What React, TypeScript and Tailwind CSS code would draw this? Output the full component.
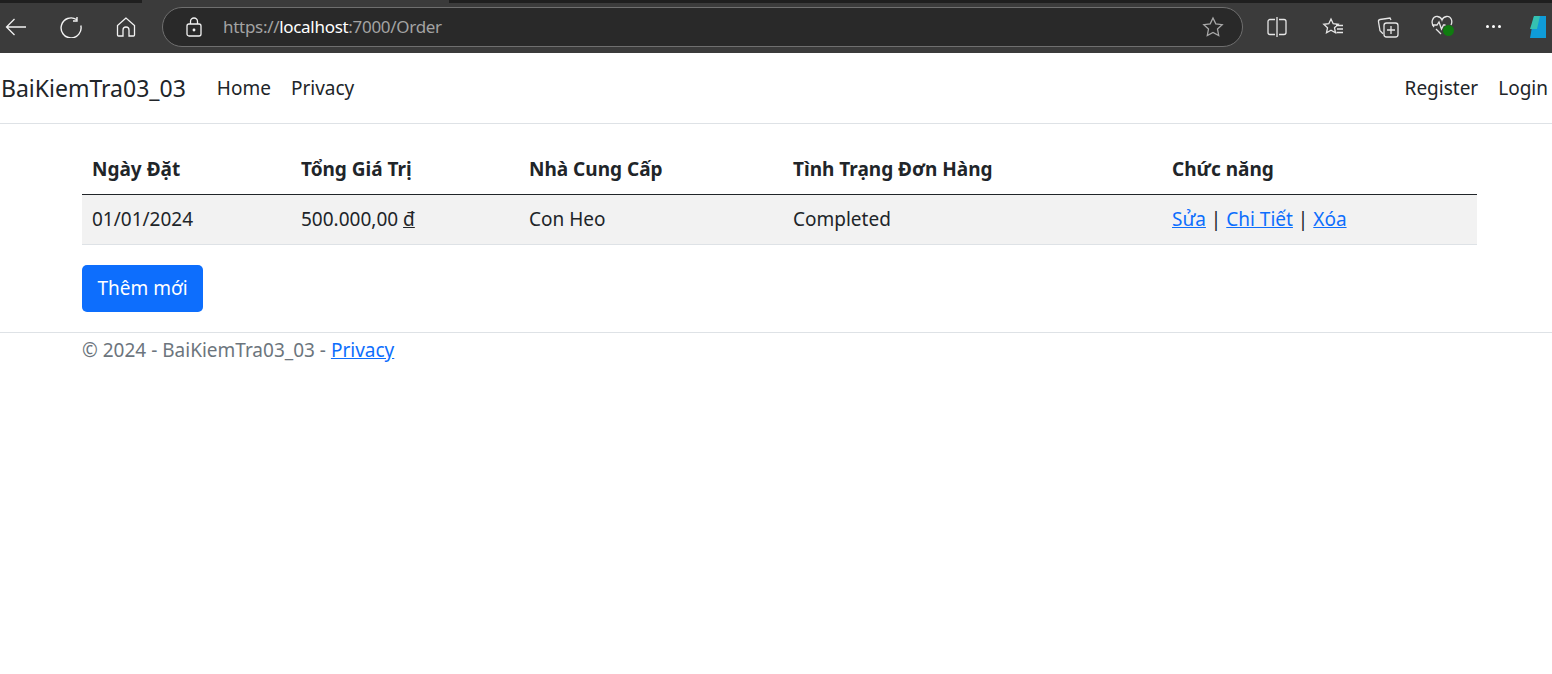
const FONT = "font-['Noto_Sans',sans-serif]"

function Toolbar() {
  return (
    <div className="relative h-[53px] bg-[#3b3b3b] flex items-center text-white">
      <div className="absolute top-0 left-0 h-[3px] w-[142px] bg-[#1f1f1f]" />
      <div className="absolute top-0 left-[449px] right-0 h-[3px] bg-[#1f1f1f]" />
      <div className="w-[32px] flex justify-center">
        <svg width="22" height="18" viewBox="0 0 22 18" fill="none" stroke="#f2f2f2" strokeWidth="1.3">
          <path d="M21 9H1.5M9.5 1 1.5 9l8 8" />
        </svg>
      </div>
      <div className="ml-[23px] w-[32px] flex justify-center">
        <svg width="22" height="22" viewBox="0 0 22 22" fill="none" stroke="#f2f2f2" strokeWidth="1.4">
          <path d="M16.5 3.5A10 10 0 1 0 20.8 9.5M17 1v4h-4" />
        </svg>
      </div>
      <div className="ml-[23px] w-[32px] flex justify-center">
        <svg width="20" height="20" viewBox="0 0 20 20" fill="none" stroke="#f2f2f2" strokeWidth="1.3">
          <path d="M10 1 1.5 8.5V18a1 1 0 0 0 1 1H7v-6a3 3 0 0 1 6 0v6h4.500a1 1 0 0 0 1-1V8.500z" />
        </svg>
      </div>
      <div className="ml-[20px] w-[1081px] h-[40px] rounded-[20px] bg-[#292929] border border-[#6f6f6f] flex items-center">
        <svg className="ml-[23px]" width="16" height="20" viewBox="0 0 16 20" fill="none" stroke="#f2f2f2" strokeWidth="1.3">
          <rect x="1" y="7" width="14" height="12" rx="2" />
          <path d="M4.500 7V4.500a3.500 3.500 0 0 1 7 0V7" />
          <circle cx="8" cy="13" r="0.800" fill="#f2f2f2" />
        </svg>
        <span className={`ml-[21px] text-[17px] tracking-[-0.3px] text-[#a3a3a3] ${FONT}`}>
          https://<span className="text-white">localhost</span>:7000/Order
        </span>
        <svg className="ml-auto mr-[18px]" width="22" height="22" viewBox="0 0 22 22" fill="none" stroke="#a8a8a8" strokeWidth="1.300">
          <path d="m11 2 2.800 5.900 6.400.8-4.700 4.400 1.200 6.400-5.700-3.100-5.700 3.100 1.200-6.400L1.800 8.700l6.400-.8z" />
        </svg>
      </div>
      <svg className="ml-[24px]" width="20" height="20" viewBox="0 0 20 20" fill="none" stroke="#e6e6e6" strokeWidth="1.300">
        <path d="M8 2.500H3a2 2 0 0 0-2 2v11a2 2 0 0 0 2 2h5M12 2.500h5a2 2 0 0 1 2 2v11a2 2 0 0 1-2 2h-5M10 0v20" />
      </svg>
      <svg className="ml-[35px]" width="22" height="22" viewBox="0 0 22 22" fill="none" stroke="#e6e6e6" strokeWidth="1.300">
        <path d="m9 3 2.200 4.700 5 .6-3.700 3.500 1 5-4.500-2.500-4.500 2.500 1-5L1.800 8.300l5-.6zM14 9.500h7M15 13h6M14.500 16.500H21" />
      </svg>
      <svg className="ml-[33px]" width="22" height="22" viewBox="0 0 22 22" fill="none" stroke="#e6e6e6" strokeWidth="1.300">
        <path d="M14 4 13 2 3 3.500a2 2 0 0 0-1.500 2.300l1.500 9 3 3" />
        <rect x="7" y="7" width="14" height="14" rx="2.500" />
        <path d="M14 10v8M10 14h8" />
      </svg>
      <div className="relative ml-[32px] w-[24px] h-[24px]">
        <svg width="22" height="20" viewBox="0 0 22 20" fill="none" stroke="#e6e6e6" strokeWidth="1.300">
          <path d="M3 12C-1 7 2 1 6.500 1.500 9 1.800 10.500 3.500 11 5c.5-1.500 2-3.200 4.500-3.500C20 1 22 6 20 10M1 10h5l2-3 2.500 7 2-4h2M5 14l5 5" />
        </svg>
        <div className="absolute left-[12px] top-[10px] w-[11px] h-[11px] rounded-full bg-[#107c10]" />
      </div>
      <div className="ml-[31px] flex gap-[3px]">
        <div className="w-[3px] h-[3px] rounded-full bg-white" />
        <div className="w-[3px] h-[3px] rounded-full bg-white" />
        <div className="w-[3px] h-[3px] rounded-full bg-white" />
      </div>
      <svg className="ml-[27px]" width="18" height="24" viewBox="0 0 18 24">
        <path d="M6 1h12v22H2z" fill="#0f9bd7" />
        <path d="M6 1h6L9 14H2z" fill="#35c1b1" />
      </svg>
    </div>
  )
}

function Navbar() {
  return (
    <div className={`h-[71px] border-b border-[#dee2e6] flex items-center text-[#212529] ${FONT}`}>
      <span className="ml-[1px] text-[23px] leading-[34px]">BaiKiemTra03_03</span>
      <span className="ml-[31px] text-[19px]">Home</span>
      <span className="ml-[20px] text-[19px]">Privacy</span>
      <span className="ml-auto text-[19px]">Register</span>
      <span className="ml-[20px] mr-[4px] text-[19px]">Login</span>
    </div>
  )
}

export default function App() {
  const link = "text-[#0d6efd] underline"
  return (
    <div className={`min-h-[674px] bg-white ${FONT}`}>
      <Toolbar />
      <Navbar />
      <div className="mx-[82px] mr-[75px] pt-[20px] text-[19px] text-[#212529]">
        <table className="w-full table-fixed border-collapse">
          <colgroup>
            <col className="w-[209px]" />
            <col className="w-[228px]" />
            <col className="w-[264px]" />
            <col className="w-[379px]" />
            <col />
          </colgroup>
          <thead>
            <tr className="border-b border-[#212529] text-left">
              <th className="px-[10px] pb-[10px] pt-[10px] h-[50px] font-bold">Ngày Đặt</th>
              <th className="px-[10px] pb-[10px] pt-[10px] font-bold">Tổng Giá Trị</th>
              <th className="px-[10px] pb-[10px] pt-[10px] font-bold">Nhà Cung Cấp</th>
              <th className="px-[10px] pb-[10px] pt-[10px] font-bold">Tình Trạng Đơn Hàng</th>
              <th className="px-[10px] pb-[10px] pt-[10px] font-bold">Chức năng</th>
            </tr>
          </thead>
          <tbody>
            <tr className="bg-[#f2f2f2] border-b border-[#dee2e6]">
              <td className="px-[10px] h-[50px]">01/01/2024</td>
              <td className="px-[10px]">500.000,00 <span className="underline">đ</span></td>
              <td className="px-[10px]">Con Heo</td>
              <td className="px-[10px]">Completed</td>
              <td className="px-[10px]">
                <a className={link}>Sửa</a> | <a className={link}>Chi Tiết</a> | <a className={link}>Xóa</a>
              </td>
            </tr>
          </tbody>
        </table>
        <button className="mt-[20px] block w-[121px] h-[47px] rounded-[5px] bg-[#0d6efd] text-white">Thêm mới</button>
      </div>
      <div className="mt-[20px] border-t border-[#dee2e6] pl-[82px] text-[19px] leading-[34px] text-[#6c757d]">
        © 2024 - BaiKiemTra03_03 - <a className={link}>Privacy</a>
      </div>
    </div>
  )
}
